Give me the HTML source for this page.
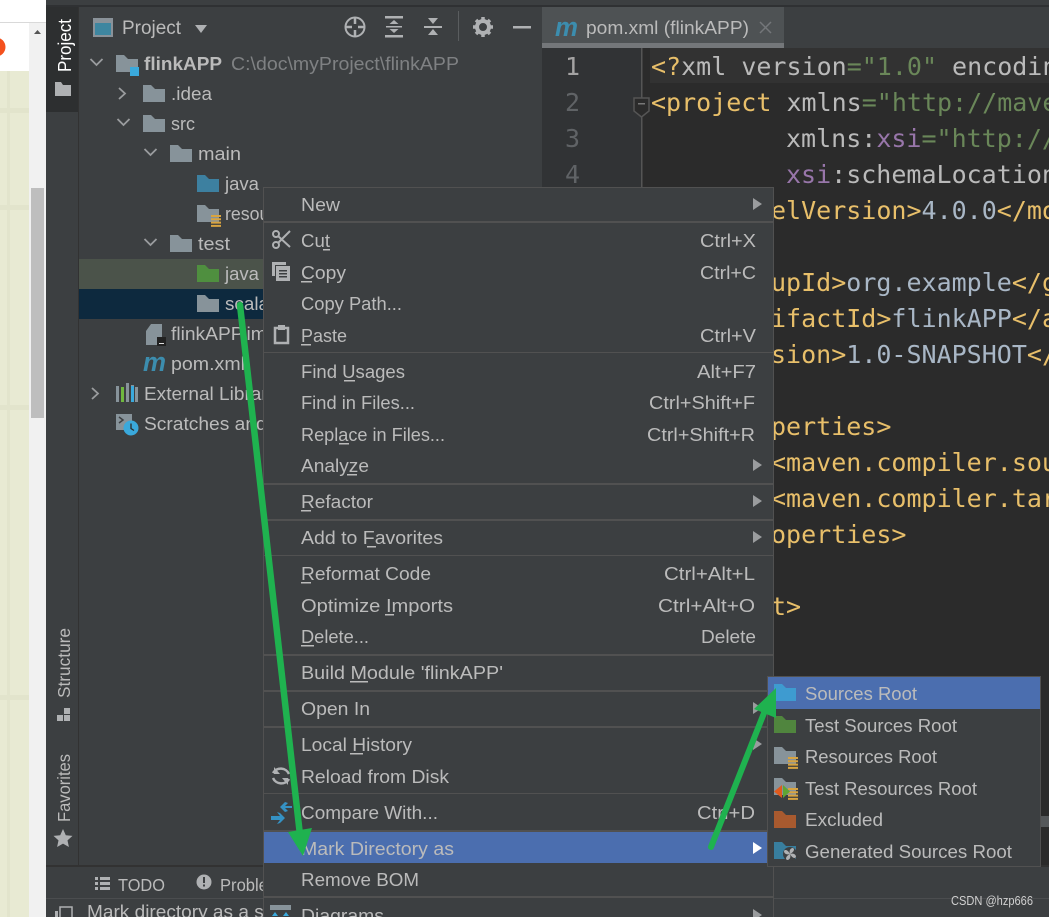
<!DOCTYPE html>
<html><head><meta charset="utf-8"><style>
html,body{margin:0;padding:0;background:#fff;overflow:hidden}
svg{display:block}
text{white-space:pre}
.u{font-family:"Liberation Sans",sans-serif;font-size:18.5px;fill:#bbbbbb}
.c{font-family:"DejaVu Sans Mono",monospace;font-size:25px;fill:#a9b7c6}
.n{font-family:"DejaVu Sans Mono",monospace;font-size:25px;fill:#606366}
.t{fill:#e8bf6a}.a{fill:#bababa}.s{fill:#6a8759}.p{fill:#9876aa}.v{fill:#a9b7c6}
</style></head><body>
<svg xmlns="http://www.w3.org/2000/svg" width="1049" height="917" viewBox="0 0 1049 917">
<defs>
<symbol id="f" viewBox="0 0 22 17" overflow="visible"><path d="M0 0h8l4 4h10v13H0z" fill="currentColor"/></symbol>
<symbol id="r" viewBox="0 0 10 12"><path d="M0 0h10v2H0zM0 3.300h10v2H0zM0 6.600h10v2H0zM0 9.900h10v2H0z" fill="#d8a441"/></symbol>
</defs>
<!-- browser page behind -->
<rect width="1049" height="917" fill="#fff"/>
<rect x="0" y="22" width="46" height="1" fill="#d9d9d9"/>
<rect x="0" y="71" width="29" height="846" fill="#e8ead3"/>
<path d="M0 108h29v5H0zM0 205h29v5H0zM0 405h29v5H0zM0 695h29v5H0zM7 71h3v846H7z" fill="#e2e4cc"/>
<rect x="29" y="23" width="17" height="894" fill="#f1f1f1"/>
<rect x="31" y="188" width="13" height="230" fill="#bebebe"/>
<path d="M34 34l3.500-4 3.500 4z" fill="#555"/>
<circle cx="-4" cy="47" r="9.500" fill="#f4511e"/>
<!-- IDE base -->
<rect x="46" y="0" width="1003" height="917" fill="#3c3f41"/>
<rect x="46" y="5" width="1003" height="2" fill="#2f3133"/>
<rect x="46" y="7" width="32" height="105" fill="#2d2f30"/>
<rect x="78" y="7" width="1" height="858" fill="#323232"/>
<!-- left stripe -->
<text transform="translate(71,72) rotate(-90)" font-family="Liberation Sans,sans-serif" font-size="18" fill="#fff" textLength="53" lengthAdjust="spacingAndGlyphs">Project</text>
<path d="M55 82h6l2 3h8v11H55z" fill="#afb1b3"/>
<text transform="translate(70,698) rotate(-90)" class="u" style="font-size:17.500px" textLength="70" lengthAdjust="spacingAndGlyphs">Structure</text>
<path d="M57 715h6v6h-6zM64 715h6v6h-6zM64 708h6v6h-6z" fill="#afb1b3"/>
<text transform="translate(70,822) rotate(-90)" class="u" style="font-size:17.500px" textLength="68" lengthAdjust="spacingAndGlyphs">Favorites</text>
<path d="M63 829l2.800 6.200 6.700.7-5 4.500 1.400 6.600-5.900-3.400-5.900 3.400 1.400-6.600-5-4.500 6.700-.7z" fill="#afb1b3"/>
<!-- project header -->
<rect x="93" y="18" width="20" height="19" fill="#8a9299"/><rect x="95" y="23" width="16" height="12" fill="#3e86a0"/>
<text x="122" y="34" class="u" style="font-size:19px" textLength="59" lengthAdjust="spacingAndGlyphs">Project</text>
<path d="M195 25h12l-6 8z" fill="#afb1b3"/>
<circle cx="355" cy="27" r="9.500" fill="none" stroke="#afb1b3" stroke-width="2"/>
<path d="M355 17v7M355 30v7M345 27h7M358 27h7" stroke="#afb1b3" stroke-width="2.500"/>
<path d="M385 16h18v2.500h-18zM385 35h18v2.500h-18zM394 20l4.500 4h-9zM394 33l4.500-4h-9zM386 26h16v1.500h-16z" fill="#afb1b3"/>
<path d="M424 26h18v2h-18zM433 24l-5-6h10zM433 29l-5 6h10z" fill="#afb1b3"/>
<rect x="458" y="11" width="1" height="30" fill="#5a5d5f"/>
<circle cx="483" cy="27" r="6" fill="none" stroke="#afb1b3" stroke-width="4"/>
<path d="M483 17v20M473 27h20M476 20l14 14M490 20l-14 14" stroke="#afb1b3" stroke-width="3.500" stroke-dasharray="3 14 3 0"/>
<rect x="513" y="26" width="18" height="2.500" fill="#afb1b3"/>
<!-- tree selection rows -->
<rect x="79" y="259" width="463" height="30" fill="#4b534a"/>
<rect x="79" y="289" width="463" height="30" fill="#0d293e"/>
<!-- chevrons -->
<g fill="none" stroke="#9a9c9e" stroke-width="1.800">
<path d="M90.500 59l6 6 6-6M119 88l6 5.500-6 5.500M117.500 119l6 6 6-6M144.500 149l6 6 6-6M144.500 239l6 6 6-6M92 388l6 5.500-6 5.500"/>
</g>
<!-- tree icons -->
<g color="#87939a">
<use href="#f" x="116" y="55" width="22" height="17"/>
<rect x="130" y="67" width="9" height="9" fill="#3aa9dc"/>
<use href="#f" x="143" y="85" width="22" height="17"/>
<use href="#f" x="143" y="115" width="22" height="17"/>
<use href="#f" x="170" y="145" width="22" height="17"/>
<use href="#f" x="197" y="175" width="22" height="17" color="#3d80a0"/>
<use href="#f" x="197" y="205" width="22" height="17"/>
<use href="#r" x="211" y="215" width="10" height="12"/>
<use href="#f" x="170" y="235" width="22" height="17"/>
<use href="#f" x="197" y="265" width="22" height="17" color="#4f8f3f"/>
<use href="#f" x="197" y="295" width="22" height="17"/>
</g>
<path d="M146 331l5-7h11v21h-16z" fill="#87939a"/><rect x="157" y="337" width="9" height="9" fill="#222"/><rect x="159" y="343" width="5" height="1" fill="#ddd"/>
<text x="143" y="371" font-family="Liberation Sans,sans-serif" font-weight="bold" font-style="italic" font-size="27" fill="#3c8dae" textLength="23" lengthAdjust="spacingAndGlyphs">m</text>
<path d="M116 386h3v16h-3zM131 385h3v17h-3z" fill="#87939a"/><rect x="121" y="387" width="3" height="15" fill="#6fb83f"/><rect x="126" y="383" width="3" height="19" fill="#87939a"/><rect x="131" y="386" width="3" height="16" fill="#3aa9dc"/><rect x="135" y="387" width="3" height="15" fill="#87939a"/>
<path d="M116 414h16v16h-16z" fill="#87939a"/><path d="M119 417l4 3-4 3" stroke="#3c3f41" stroke-width="1.500" fill="none"/>
<circle cx="131" cy="428" r="7.500" fill="#3aa9dc"/><path d="M131 423.500v5l3 2" stroke="#2b2b2b" stroke-width="1.300" fill="none"/>
<!-- tree text -->
<text x="144" y="70" class="u" font-weight="bold" textLength="78" lengthAdjust="spacingAndGlyphs">flinkAPP</text>
<text x="231" y="70" class="u" style="fill:#7f8183" textLength="228" lengthAdjust="spacingAndGlyphs">C:\doc\myProject\flinkAPP</text>
<text x="171" y="100" class="u" textLength="41" lengthAdjust="spacingAndGlyphs">.idea</text>
<text x="171" y="130" class="u" textLength="24" lengthAdjust="spacingAndGlyphs">src</text>
<text x="198" y="160" class="u" textLength="43" lengthAdjust="spacingAndGlyphs">main</text>
<text x="225" y="190" class="u" textLength="34" lengthAdjust="spacingAndGlyphs">java</text>
<text x="225" y="220" class="u" textLength="78" lengthAdjust="spacingAndGlyphs">resources</text>
<text x="198" y="250" class="u" textLength="32" lengthAdjust="spacingAndGlyphs">test</text>
<text x="225" y="280" class="u" textLength="34" lengthAdjust="spacingAndGlyphs">java</text>
<text x="225" y="310" class="u" textLength="44" lengthAdjust="spacingAndGlyphs">scala</text>
<text x="171" y="340" class="u" textLength="100" lengthAdjust="spacingAndGlyphs">flinkAPP.iml</text>
<text x="171" y="370" class="u" textLength="74" lengthAdjust="spacingAndGlyphs">pom.xml</text>
<text x="144" y="400" class="u" textLength="148" lengthAdjust="spacingAndGlyphs">External Libraries</text>
<text x="144" y="430" class="u" textLength="208" lengthAdjust="spacingAndGlyphs">Scratches and Consoles</text>
<!-- editor -->
<rect x="542" y="7" width="507" height="859" fill="#2b2b2b"/>
<rect x="784" y="7" width="265" height="41" fill="#3c3f41"/>
<rect x="542" y="7" width="242" height="36" fill="#4e5254"/>
<rect x="542" y="43" width="242" height="5" fill="#74777a"/>
<rect x="542" y="48" width="99" height="818" fill="#313335"/>
<rect x="641" y="48" width="1.500" height="818" fill="#555555"/>
<rect x="650" y="48" width="399" height="35" fill="#323232"/>
<text x="555" y="36" font-family="Liberation Sans,sans-serif" font-weight="bold" font-style="italic" font-size="27" fill="#3c8dae" textLength="23" lengthAdjust="spacingAndGlyphs">m</text>
<text x="586" y="34" class="u" textLength="163" lengthAdjust="spacingAndGlyphs">pom.xml (flinkAPP)</text>
<path d="M760 22l11 11M771 22l-11 11" stroke="#74777a" stroke-width="1.500"/>
<path d="M634 98h15v13l-7.500 6-7.500-6z" fill="#2b2b2b" stroke="#555" stroke-width="1.500"/><rect x="638" y="103" width="7" height="1.500" fill="#777"/>
<text x="565" y="75" class="n" style="fill:#a4a3a3">1</text>
<text x="565" y="111" class="n">2</text>
<text x="565" y="147" class="n">3</text>
<text x="565" y="183" class="n">4</text>
<text x="651" y="75" class="c"><tspan class="t">&lt;?</tspan><tspan class="a">xml version</tspan><tspan class="s">="1.0"</tspan><tspan class="a"> encoding</tspan><tspan class="s">="UTF-8"</tspan></text>
<text x="651" y="111" class="c"><tspan class="t">&lt;project </tspan><tspan class="a">xmlns</tspan><tspan class="s">="http://maven.apache.org/POM"</tspan></text>
<text x="786" y="147" class="c"><tspan class="a">xmlns:</tspan><tspan class="p">xsi</tspan><tspan class="s">="http://www.w3.org"</tspan></text>
<text x="786" y="183" class="c"><tspan class="p">xsi</tspan><tspan class="a">:schemaLocation</tspan><tspan class="s">="http"</tspan></text>
<text x="771" y="219" class="c"><tspan class="t">elVersion&gt;</tspan><tspan class="v">4.0.0</tspan><tspan class="t">&lt;/modelVersion&gt;</tspan></text>
<text x="771" y="291" class="c"><tspan class="t">upId&gt;</tspan><tspan class="v">org.example</tspan><tspan class="t">&lt;/groupId&gt;</tspan></text>
<text x="771" y="327" class="c"><tspan class="t">ifactId&gt;</tspan><tspan class="v">flinkAPP</tspan><tspan class="t">&lt;/artifactId&gt;</tspan></text>
<text x="771" y="363" class="c"><tspan class="t">sion&gt;</tspan><tspan class="v">1.0-SNAPSHOT</tspan><tspan class="t">&lt;/version&gt;</tspan></text>
<text x="771" y="435" class="c t">perties&gt;</text>
<text x="771" y="471" class="c t">&lt;maven.compiler.source&gt;</text>
<text x="771" y="507" class="c t">&lt;maven.compiler.target&gt;</text>
<text x="771" y="543" class="c t">operties&gt;</text>
<text x="771" y="615" class="c t">t&gt;</text>
<rect x="1041" y="816" width="8" height="11" fill="#55585a"/>
<!-- bottom -->
<rect x="46" y="866" width="1003" height="51" fill="#3c3f41"/>
<rect x="46" y="865" width="1003" height="2" fill="#323232"/>
<rect x="46" y="898" width="1003" height="1" fill="#4b4d4f"/>
<path d="M95 877h3v3h-3zM100 877h10v3h-10zM95 882h3v3h-3zM100 882h10v3h-10zM95 887h3v3h-3zM100 887h10v3h-10z" fill="#afb1b3"/>
<text x="118" y="891" class="u" style="font-size:17.500px" textLength="47" lengthAdjust="spacingAndGlyphs">TODO</text>
<circle cx="204" cy="882" r="7.500" fill="#afb1b3"/><path d="M203 877h2v6h-2zM203 884.500h2v2h-2z" fill="#3c3f41"/>
<text x="220" y="891" class="u" style="font-size:17.500px" textLength="70" lengthAdjust="spacingAndGlyphs">Problems</text>
<rect x="60" y="907" width="12" height="14" fill="none" stroke="#afb1b3" stroke-width="1.500"/><rect x="55" y="911" width="3" height="8" fill="#afb1b3"/>
<text x="87" y="918" class="u" textLength="272" lengthAdjust="spacingAndGlyphs">Mark directory as a sources root</text>
<!-- context menu -->
<rect x="263.500" y="187.500" width="510" height="740" fill="#3c3f41" stroke="#515151"/>
<rect x="264" y="832" width="509" height="31" fill="#4b6eaf"/>
<g fill="#515151">
<rect x="264" y="221" width="509" height="2"/><rect x="264" y="352" width="509" height="1"/><rect x="264" y="483" width="509" height="2"/><rect x="264" y="519" width="509" height="2"/><rect x="264" y="555" width="509" height="1"/><rect x="264" y="654" width="509" height="2"/><rect x="264" y="690" width="509" height="2"/><rect x="264" y="726" width="509" height="2"/><rect x="264" y="793" width="509" height="1"/><rect x="264" y="830" width="509" height="2"/><rect x="264" y="896" width="509" height="2"/>
</g>
<g>
<text x="301" y="211" class="u" textLength="39" lengthAdjust="spacingAndGlyphs">New</text>
<text x="301" y="247" class="u" textLength="29" lengthAdjust="spacingAndGlyphs">Cut</text>
<text x="301" y="279" class="u" textLength="45" lengthAdjust="spacingAndGlyphs">Copy</text>
<text x="301" y="310" class="u" textLength="101" lengthAdjust="spacingAndGlyphs">Copy Path...</text>
<text x="301" y="342" class="u" textLength="46" lengthAdjust="spacingAndGlyphs">Paste</text>
<text x="301" y="378" class="u" textLength="104" lengthAdjust="spacingAndGlyphs">Find Usages</text>
<text x="301" y="409" class="u" textLength="114" lengthAdjust="spacingAndGlyphs">Find in Files...</text>
<text x="301" y="441" class="u" textLength="144" lengthAdjust="spacingAndGlyphs">Replace in Files...</text>
<text x="301" y="472" class="u" textLength="68" lengthAdjust="spacingAndGlyphs">Analyze</text>
<text x="301" y="508" class="u" textLength="72" lengthAdjust="spacingAndGlyphs">Refactor</text>
<text x="301" y="544" class="u" textLength="142" lengthAdjust="spacingAndGlyphs">Add to Favorites</text>
<text x="301" y="580" class="u" textLength="130" lengthAdjust="spacingAndGlyphs">Reformat Code</text>
<text x="301" y="612" class="u" textLength="152" lengthAdjust="spacingAndGlyphs">Optimize Imports</text>
<text x="301" y="643" class="u" textLength="68" lengthAdjust="spacingAndGlyphs">Delete...</text>
<text x="301" y="679" class="u" textLength="202" lengthAdjust="spacingAndGlyphs">Build Module 'flinkAPP'</text>
<text x="301" y="715" class="u" textLength="69" lengthAdjust="spacingAndGlyphs">Open In</text>
<text x="301" y="751" class="u" textLength="111" lengthAdjust="spacingAndGlyphs">Local History</text>
<text x="301" y="783" class="u" textLength="148" lengthAdjust="spacingAndGlyphs">Reload from Disk</text>
<text x="301" y="819" class="u" textLength="137" lengthAdjust="spacingAndGlyphs">Compare With...</text>
<text x="301" y="855" class="u" textLength="153" lengthAdjust="spacingAndGlyphs">Mark Directory as</text>
<text x="301" y="886" class="u" textLength="118" lengthAdjust="spacingAndGlyphs">Remove BOM</text>
<text x="301" y="922" class="u" textLength="83" lengthAdjust="spacingAndGlyphs">Diagrams</text>
</g>
<!-- underlines -->
<g fill="#bbbbbb">
<rect x="323" y="249" width="7" height="1.500"/><rect x="301" y="281" width="11" height="1.500"/><rect x="301" y="344" width="10" height="1.500"/><rect x="344" y="380" width="11" height="1.500"/><rect x="339" y="443" width="10" height="1.500"/><rect x="347" y="474" width="10" height="1.500"/><rect x="301" y="510" width="10" height="1.500"/><rect x="367" y="546" width="9" height="1.500"/><rect x="301" y="582" width="10" height="1.500"/><rect x="385" y="614" width="9" height="1.500"/><rect x="301" y="645" width="13" height="1.500"/><rect x="350" y="681" width="18" height="1.500"/><rect x="350" y="753" width="13" height="1.500"/>
</g>
<!-- shortcuts -->
<g>
<text x="700" y="247" class="u" textLength="56" lengthAdjust="spacingAndGlyphs">Ctrl+X</text>
<text x="700" y="279" class="u" textLength="56" lengthAdjust="spacingAndGlyphs">Ctrl+C</text>
<text x="700" y="342" class="u" textLength="56" lengthAdjust="spacingAndGlyphs">Ctrl+V</text>
<text x="697" y="378" class="u" textLength="59" lengthAdjust="spacingAndGlyphs">Alt+F7</text>
<text x="649" y="409" class="u" textLength="106" lengthAdjust="spacingAndGlyphs">Ctrl+Shift+F</text>
<text x="647" y="441" class="u" textLength="108" lengthAdjust="spacingAndGlyphs">Ctrl+Shift+R</text>
<text x="664" y="580" class="u" textLength="91" lengthAdjust="spacingAndGlyphs">Ctrl+Alt+L</text>
<text x="658" y="612" class="u" textLength="97" lengthAdjust="spacingAndGlyphs">Ctrl+Alt+O</text>
<text x="701" y="643" class="u" textLength="55" lengthAdjust="spacingAndGlyphs">Delete</text>
<text x="697" y="819" class="u" textLength="58" lengthAdjust="spacingAndGlyphs">Ctrl+D</text>
</g>
<!-- submenu arrows -->
<g fill="#9a9c9e">
<path d="M753 198l9 6-9 6zM753 459l9 6-9 6zM753 495l9 6-9 6zM753 531l9 6-9 6zM753 702l9 6-9 6zM753 738l9 6-9 6zM753 909l9 6-9 6z"/>
</g>
<path d="M753 842l9 6-9 6z" fill="#fff"/>
<!-- menu icons -->
<g fill="none" stroke="#afb1b3" stroke-width="2">
<circle cx="276" cy="234" r="3"/><circle cx="276" cy="245" r="3"/>
<path d="M278 236l12 11M278 243l12-12"/>
</g>
<path d="M272 262h3v14h-3zM272 262h14v3h-14z" fill="#afb1b3"/>
<rect x="276" y="266" width="14" height="15" fill="#afb1b3"/>
<path d="M279 270h8v1.500h-8zM279 273h8v1.500h-8zM279 276h8v1.500h-8z" fill="#3c3f41"/>
<rect x="275" y="328" width="13" height="15" fill="none" stroke="#afb1b3" stroke-width="2.500"/>
<rect x="278" y="325" width="7" height="5" fill="#afb1b3"/>
<path d="M289 774a9 9 0 0 0-16-1M273 778a9 9 0 0 0 16 1" fill="none" stroke="#afb1b3" stroke-width="2.500"/>
<path d="M274 767v7h6zM288 785v-7h-6z" fill="#afb1b3"/>
<path d="M271 816h9l-3-4 3 1 5 5-5 5-3 1 3-4h-9zM292 806h-7l3-3-3-1-5 5 5 5 3-1-3-3h7z" fill="#3592c4"/>
<rect x="270" y="905" width="21" height="5" fill="#87939a"/>
<path d="M275 912l-3 4h6zM286 912l-3 4h6z" fill="#3aa9dc"/>
<!-- submenu -->
<rect x="767.500" y="676.500" width="273" height="190" fill="#3c3f41" stroke="#515151"/>
<rect x="768" y="677" width="272" height="32" fill="#4b6eaf"/>
<use href="#f" x="774" y="684" width="22" height="17" color="#3e9bd0"/>
<use href="#f" x="774" y="716" width="22" height="17" color="#50853e"/>
<use href="#f" x="774" y="747" width="22" height="17" color="#87939a"/>
<use href="#r" x="788" y="757" width="10" height="12"/>
<use href="#f" x="774" y="778" width="22" height="17" color="#87939a"/>
<use href="#r" x="788" y="788" width="10" height="12"/>
<path d="M782 785v13l-8-6.500z" fill="#e05a1d"/><path d="M783 785v13l7-6.500z" fill="#5fa534"/>
<use href="#f" x="774" y="811" width="22" height="17" color="#a85a2f"/>
<use href="#f" x="774" y="842" width="22" height="17" color="#387e9e"/>
<circle cx="790" cy="854" r="7" fill="#3c3f41"/>
<path d="M790 854c-1-3 0-6 3-6 2 1 1 4-3 6zM790 854c3-1 6 0 6 3-1 2-4 1-6-3zM790 854c1 3 0 6-3 6-2-1-1-4 3-6zM790 854c-3 1-6 0-6-3 1-2 4-1 6 3z" fill="#afb1b3"/>
<text x="805" y="700" class="u" textLength="112" lengthAdjust="spacingAndGlyphs">Sources Root</text>
<text x="805" y="732" class="u" textLength="152" lengthAdjust="spacingAndGlyphs">Test Sources Root</text>
<text x="805" y="763" class="u" textLength="132" lengthAdjust="spacingAndGlyphs">Resources Root</text>
<text x="805" y="795" class="u" textLength="172" lengthAdjust="spacingAndGlyphs">Test Resources Root</text>
<text x="805" y="826" class="u" textLength="78" lengthAdjust="spacingAndGlyphs">Excluded</text>
<text x="805" y="858" class="u" textLength="207" lengthAdjust="spacingAndGlyphs">Generated Sources Root</text>
<!-- green arrows -->
<path d="M240 305L300 835" stroke="#1fb24f" stroke-width="6.500" stroke-linecap="round" fill="none"/>
<path d="M288 832L312 828L303 856z" fill="#1fb24f"/>
<path d="M711 847L766 708" stroke="#1fb24f" stroke-width="6" stroke-linecap="round" fill="none"/>
<path d="M754 709L776 688L776 718z" fill="#1fb24f"/>
<!-- watermark -->
<text x="951" y="905" font-family="Liberation Sans,sans-serif" font-size="12.500" fill="#d0d0d0" textLength="82" lengthAdjust="spacingAndGlyphs">CSDN @hzp666</text>
</svg>
</body></html>
